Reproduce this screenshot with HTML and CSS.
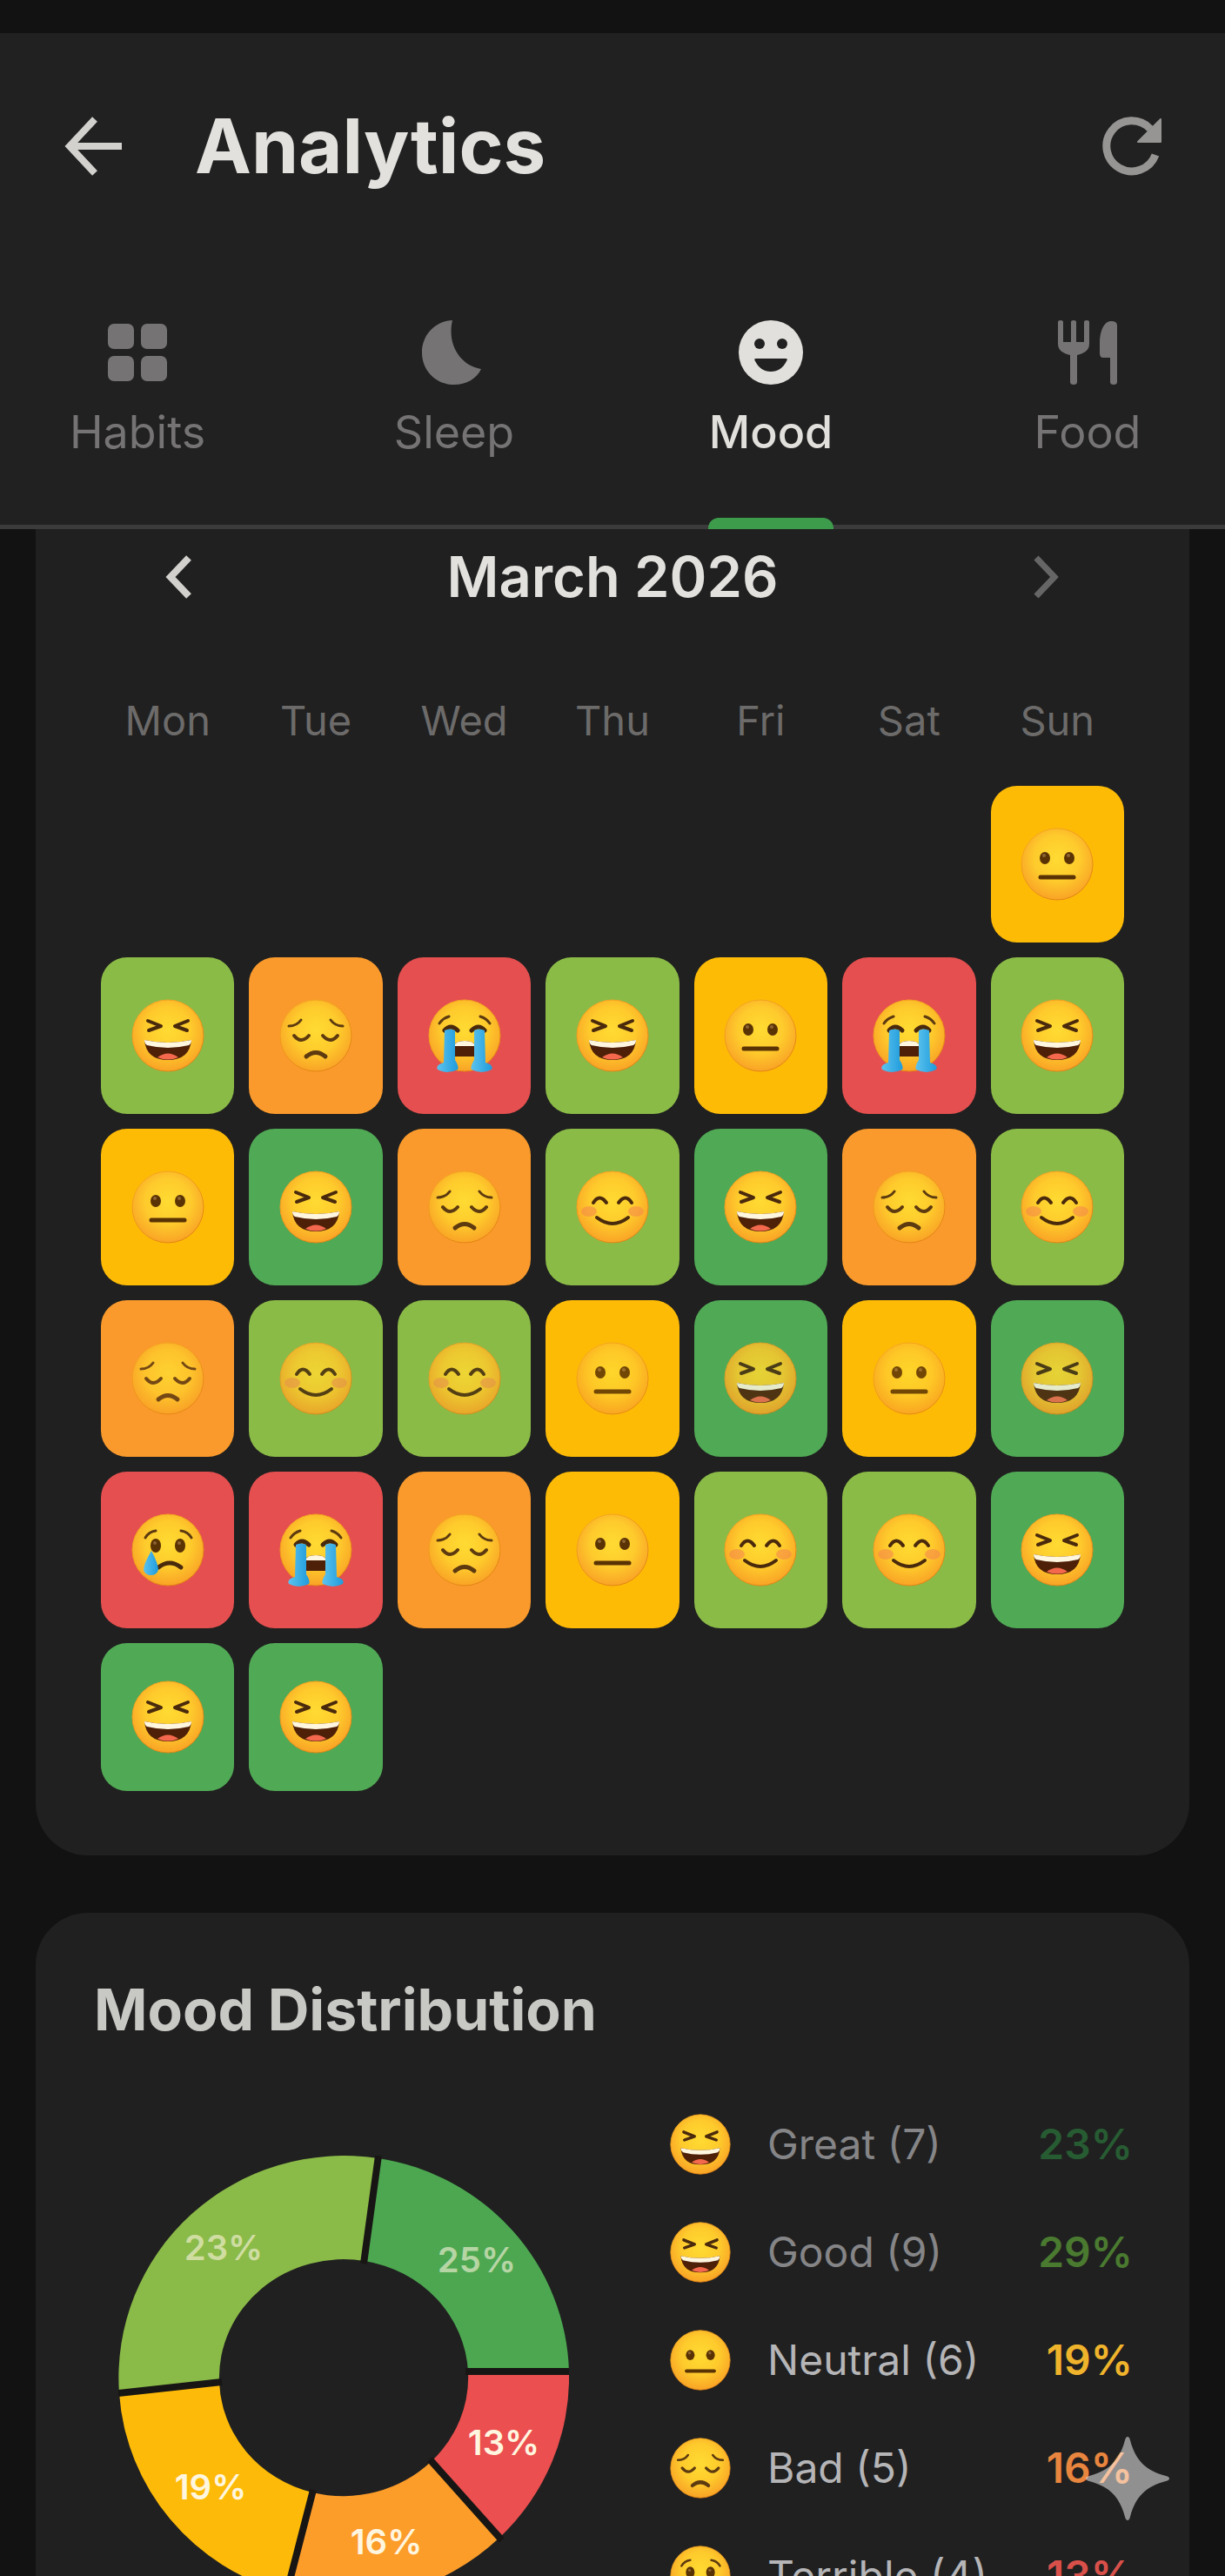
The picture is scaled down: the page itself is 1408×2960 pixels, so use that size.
FILE: index.html
```html
<!DOCTYPE html>
<html lang="en">
<head>
    <meta charset="UTF-8">
    <meta name="viewport" content="width=device-width, initial-scale=1.0">
    <title>Analytics</title>
    <link rel="stylesheet" href="styles.css">
</head>
<body>
    <!-- Mood faces, used by the calendar and the legend -->
    <svg class="sprite" aria-hidden="true">
        <defs>
            <radialGradient id="skin" cx="0.5" cy="0.42" r="0.58">
                <stop offset="0" stop-color="#ffdb32"/>
                <stop offset="0.55" stop-color="#fecb2c"/>
                <stop offset="1" stop-color="#f9a326"/>
            </radialGradient>
            <linearGradient id="rim" x1="0.2" y1="0" x2="0.8" y2="1">
                <stop offset="0" stop-color="#f6a821"/>
                <stop offset="1" stop-color="#e07f12"/>
            </linearGradient>
            <linearGradient id="water" x1="0" x2="1">
                <stop offset="0" stop-color="#5cc3ee"/>
                <stop offset="1" stop-color="#1f9bdc"/>
            </linearGradient>
        </defs>
        <symbol id="laugh" viewBox="0 0 84 84">
            <circle cx="42" cy="42" r="41" fill="url(#skin)" stroke="url(#rim)"/>
            <path d="M19 25L34 31L20 36M65 25L50 31L64 36" fill="none" stroke="#4a2a0c" stroke-width="4" stroke-linecap="round" stroke-linejoin="round"/>
            <path d="M15 47Q42 53 69 47Q67 70 42 70Q17 70 15 47Z" fill="#4f2008"/>
            <path d="M15 47Q42 53 69 47Q69 51 66 53Q42 59 18 53Q15 51 15 47Z" fill="#fff6e0"/>
            <path d="M30 67Q42 58 54 67Q42 72 30 67Z" fill="#f4694d"/>
        </symbol>
        <symbol id="pensive" viewBox="0 0 84 84">
            <circle cx="42" cy="42" r="41" fill="url(#skin)" stroke="url(#rim)"/>
            <path d="M11 31Q20 31 25 24M73 31Q64 31 59 24" fill="none" stroke="#5d3a10" stroke-width="3" stroke-linecap="round"/>
            <path d="M17 42Q25 52 34 42M50 42Q59 52 67 42" fill="none" stroke="#5d3a10" stroke-width="4" stroke-linecap="round"/>
            <path d="M31 66Q42 57 53 66" fill="none" stroke="#5d3a10" stroke-width="5" stroke-linecap="round"/>
        </symbol>
        <symbol id="sob" viewBox="0 0 84 84">
            <circle cx="42" cy="42" r="41" fill="url(#skin)" stroke="url(#rim)"/>
            <path d="M13 28Q17 22 24 20M71 28Q67 22 60 20" fill="none" stroke="#5d3a10" stroke-width="3" stroke-linecap="round"/>
            <path d="M19 36Q26 28 34 36M50 36Q58 28 65 36" fill="none" stroke="#4a2a0c" stroke-width="5" stroke-linecap="round"/>
            <path d="M28 66V56Q30 48 42 48Q54 48 56 56V66Z" fill="#4f2008"/>
            <path d="M30 54Q31 48 42 48Q53 48 54 54Z" fill="#fff6e0"/>
            <path d="M19 36Q25 33 31 36V70Q36 78 34 81Q22 87 11 81Q8 76 18 73Z" fill="url(#water)"/>
            <path d="M65 36Q59 33 53 36V70Q48 78 50 81Q62 87 73 81Q76 76 66 73Z" fill="url(#water)"/>
        </symbol>
        <symbol id="neutral" viewBox="0 0 84 84">
            <circle cx="42" cy="42" r="41" fill="url(#skin)" stroke="url(#rim)"/>
            <ellipse cx="28" cy="35" rx="6" ry="7" fill="#5a3305"/>
            <ellipse cx="56" cy="35" rx="6" ry="7" fill="#5a3305"/>
            <circle cx="27" cy="32" r="2" fill="#8d6434"/>
            <circle cx="55" cy="32" r="2" fill="#8d6434"/>
            <path d="M23 57H61" stroke="#5a3305" stroke-width="5" stroke-linecap="round"/>
        </symbol>
        <symbol id="smile" viewBox="0 0 84 84">
            <circle cx="42" cy="42" r="41" fill="url(#skin)" stroke="url(#rim)"/>
            <ellipse cx="15" cy="47" rx="9" ry="6" fill="#f58a4b" opacity="0.6"/>
            <ellipse cx="69" cy="47" rx="9" ry="6" fill="#f58a4b" opacity="0.6"/>
            <path d="M20 37Q27 26 35 37M49 37Q57 26 64 37" fill="none" stroke="#4a2a0c" stroke-width="4" stroke-linecap="round"/>
            <path d="M24 54Q42 68 60 54" fill="none" stroke="#4a2a0c" stroke-width="4" stroke-linecap="round"/>
        </symbol>
        <symbol id="cry" viewBox="0 0 84 84">
            <circle cx="42" cy="42" r="41" fill="url(#skin)" stroke="url(#rim)"/>
            <path d="M16 28Q20 21 28 20M69 28Q65 21 57 20" fill="none" stroke="#5d3a10" stroke-width="3" stroke-linecap="round"/>
            <ellipse cx="28" cy="37" rx="6" ry="8" fill="#5a3305"/>
            <ellipse cx="56" cy="37" rx="6" ry="8" fill="#5a3305"/>
            <circle cx="27" cy="34" r="2" fill="#8d6434"/>
            <circle cx="55" cy="34" r="2" fill="#8d6434"/>
            <path d="M31 62Q44 52 57 62" fill="none" stroke="#4a2a0c" stroke-width="5" stroke-linecap="round"/>
            <path d="M23 43Q14 58 14 65A9 9 0 0 0 31 65Q31 58 23 43Z" fill="url(#water)"/>
        </symbol>
    </svg>

    <div class="app">
        <header class="header">
            <div class="title-bar">
                <button class="icon-btn" type="button" aria-label="Back">
                    <svg width="66" height="68" viewBox="0 0 66 68" fill="none" stroke="currentColor" stroke-width="8"><path d="M35 3L6 34L35 65M6 34H66"/></svg>
                </button>
                <h1>Analytics</h1>
                <button class="icon-btn refresh" type="button" aria-label="Refresh">
                    <svg width="68" height="68" viewBox="0 0 68 68" fill="none"><path d="M61 44A29 29 0 1 1 55 14" stroke="currentColor" stroke-width="9"/><path d="M67 3V29H41Z" fill="currentColor" stroke="currentColor" stroke-width="2" stroke-linejoin="round"/></svg>
                </button>
            </div>
            <nav class="tabs">
                <a href="#habits" class="tab">
                    <svg width="80" height="80" viewBox="0 0 80 80" fill="currentColor"><rect x="6" y="7" width="30" height="29" rx="7"/><rect x="44" y="7" width="30" height="29" rx="7"/><rect x="6" y="44" width="30" height="29" rx="7"/><rect x="44" y="44" width="30" height="29" rx="7"/></svg>
                    <span>Habits</span>
                </a>
                <a href="#sleep" class="tab">
                    <svg width="80" height="80" viewBox="0 0 80 80" fill="currentColor"><path d="M38 3C18 4 3 20 3 40C3 61 19 77 40 77C54 77 66 70 71 59C50 56 31 34 38 3Z"/></svg>
                    <span>Sleep</span>
                </a>
                <a href="#mood" class="tab active">
                    <svg width="80" height="80" viewBox="0 0 80 80"><circle cx="40" cy="40" r="37" fill="currentColor"/><ellipse cx="27" cy="30" rx="6" ry="6" fill="#212121"/><ellipse cx="53" cy="30" rx="6" ry="6" fill="#212121"/><path d="M23 47H57Q60 47 58 50C54 58 48 62 40 62S26 58 22 50Q20 47 23 47Z" fill="#212121"/></svg>
                    <span>Mood</span>
                </a>
                <a href="#food" class="tab">
                    <svg width="80" height="80" viewBox="0 0 80 80" fill="currentColor"><path d="M6 5Q6 3 9 3Q12 3 12 5V28H21V5Q21 3 24 3Q27 3 27 5V28H36V5Q36 3 39 3Q42 3 42 5V30C42 38 36 41 28 43V74Q28 77 24 77Q20 77 20 74V43C12 41 6 38 6 30Z"/><path d="M54 29C54 15 59 4 67 4Q74 4 74 9V74Q74 77 70 77Q66 77 66 74V46H58Q54 46 54 41Z"/></svg>
                    <span>Food</span>
                </a>
            </nav>
        </header>

        <main>
            <section class="card calendar-card">
                <div class="month">
                    <button class="icon-btn" type="button" aria-label="Previous month">
                        <svg width="32" height="50" viewBox="0 0 32 50" fill="none" stroke="currentColor" stroke-width="8"><path d="M28 3L7 25L28 47"/></svg>
                    </button>
                    <h2>March 2026</h2>
                    <button class="icon-btn next" type="button" aria-label="Next month">
                        <svg width="32" height="50" viewBox="0 0 32 50" fill="none" stroke="currentColor" stroke-width="7"><path d="M4 3L25 25L4 47"/></svg>
                    </button>
                </div>
                <table class="calendar">
                    <thead>
                        <tr><th>Mon</th><th>Tue</th><th>Wed</th><th>Thu</th><th>Fri</th><th>Sat</th><th>Sun</th></tr>
                    </thead>
                    <tbody>
                        <tr>
                            <td></td><td></td><td></td><td></td><td></td><td></td>
                            <td class="neutral"><svg class="face"><use href="#neutral"/></svg></td>
                        </tr>
                        <tr>
                            <td class="good"><svg class="face"><use href="#laugh"/></svg></td>
                            <td class="bad"><svg class="face"><use href="#pensive"/></svg></td>
                            <td class="terrible"><svg class="face"><use href="#sob"/></svg></td>
                            <td class="good"><svg class="face"><use href="#laugh"/></svg></td>
                            <td class="neutral"><svg class="face"><use href="#neutral"/></svg></td>
                            <td class="terrible"><svg class="face"><use href="#sob"/></svg></td>
                            <td class="good"><svg class="face"><use href="#laugh"/></svg></td>
                        </tr>
                        <tr>
                            <td class="neutral"><svg class="face"><use href="#neutral"/></svg></td>
                            <td class="great"><svg class="face"><use href="#laugh"/></svg></td>
                            <td class="bad"><svg class="face"><use href="#pensive"/></svg></td>
                            <td class="good"><svg class="face"><use href="#smile"/></svg></td>
                            <td class="great"><svg class="face"><use href="#laugh"/></svg></td>
                            <td class="bad"><svg class="face"><use href="#pensive"/></svg></td>
                            <td class="good"><svg class="face"><use href="#smile"/></svg></td>
                        </tr>
                        <tr class="faded">
                            <td class="bad"><svg class="face"><use href="#pensive"/></svg></td>
                            <td class="good"><svg class="face"><use href="#smile"/></svg></td>
                            <td class="good"><svg class="face"><use href="#smile"/></svg></td>
                            <td class="neutral"><svg class="face"><use href="#neutral"/></svg></td>
                            <td class="great"><svg class="face"><use href="#laugh"/></svg></td>
                            <td class="neutral"><svg class="face"><use href="#neutral"/></svg></td>
                            <td class="great"><svg class="face"><use href="#laugh"/></svg></td>
                        </tr>
                        <tr>
                            <td class="terrible"><svg class="face"><use href="#cry"/></svg></td>
                            <td class="terrible"><svg class="face"><use href="#sob"/></svg></td>
                            <td class="bad"><svg class="face"><use href="#pensive"/></svg></td>
                            <td class="neutral"><svg class="face"><use href="#neutral"/></svg></td>
                            <td class="good"><svg class="face"><use href="#smile"/></svg></td>
                            <td class="good"><svg class="face"><use href="#smile"/></svg></td>
                            <td class="great"><svg class="face"><use href="#laugh"/></svg></td>
                        </tr>
                        <tr class="last">
                            <td class="great"><svg class="face"><use href="#laugh"/></svg></td>
                            <td class="great"><svg class="face"><use href="#laugh"/></svg></td>
                            <td></td><td></td><td></td><td></td><td></td>
                        </tr>
                    </tbody>
                </table>
            </section>

            <section class="card distribution">
                <h2>Mood Distribution</h2>
                <div class="chart-row">
                    <svg class="donut" width="518" height="510" viewBox="0 0 518 510" role="img" aria-label="Mood distribution chart">
                        <path fill="#4ca750" d="M299 3A259 255 0 0 1 518 248L402 248A143 136 0 0 0 283 121Z"/>
                        <path fill="#eb4f4f" d="M518 248A259 255 0 0 1 438 439L360 351A143 136 0 0 0 402 248Z"/>
                        <path fill="#fc9c29" d="M438 439A259 255 0 0 1 193 502L223 387A143 136 0 0 0 360 351Z"/>
                        <path fill="#fdba08" d="M193 502A259 255 0 0 1 1 273L116 260A143 136 0 0 0 223 387Z"/>
                        <path fill="#8aba47" d="M1 273A259 255 0 0 1 299 3L283 121A143 136 0 0 0 116 260Z"/>
                        <path stroke="#181614" stroke-width="8" d="M299 0L282 124M518 248H399M0 273L119 260M193 504L224 384M441 442L358 349"/>
                        <g class="slice-labels">
                            <text class="dim" x="121" y="120">23%</text>
                            <text class="dim" x="412" y="134">25%</text>
                            <text x="443" y="344">13%</text>
                            <text x="308" y="458">16%</text>
                            <text x="106" y="395">19%</text>
                        </g>
                    </svg>
                    <ul class="legend">
                        <li><svg class="face"><use href="#laugh"/></svg><span class="name dim">Great (7)</span><span class="pct great-text">23%</span></li>
                        <li><svg class="face"><use href="#laugh"/></svg><span class="name dim">Good (9)</span><span class="pct good-text">29%</span></li>
                        <li><svg class="face"><use href="#neutral"/></svg><span class="name">Neutral (6)</span><span class="pct neutral-text">19%</span></li>
                        <li><svg class="face"><use href="#pensive"/></svg><span class="name">Bad (5)</span><span class="pct bad-text">16%</span></li>
                        <li><svg class="face"><use href="#cry"/></svg><span class="name">Terrible (4)</span><span class="pct terrible-text">13%</span></li>
                    </ul>
                </div>
            </section>
        </main>

        <svg class="sparkle" width="96" height="96" viewBox="0 0 96 96" aria-hidden="true"><path d="M48 0Q50 0 51 4C57 27 69 39 92 45Q96 46 96 48Q96 50 92 51C69 57 57 69 51 92Q50 96 48 96Q46 96 45 92C39 69 27 57 4 51Q0 50 0 48Q0 46 4 45C27 39 39 27 45 4Q46 0 48 0Z" fill="#fff" fill-opacity="0.5"/></svg>
    </div>
</body>
</html>
```
FILE: styles.css
```css
/* General Styles */
* {
    box-sizing: border-box;
}

body {
    margin: 0;
    font-family: Inter, Roboto, sans-serif;
    color: #e2e1de;
    background-color: #121212;
}

h1, h2 {
    margin: 0;
}

.sprite {
    position: absolute;
    width: 0;
    height: 0;
}

.app {
    position: relative;
    height: 100vh;
    padding-top: 38px;
    overflow: hidden;
}

.icon-btn {
    display: flex;
    padding: 0;
    border: none;
    background: none;
    color: #d2d1ce;
    cursor: pointer;
}

/* Header */
.header {
    background-color: #212121;
    border-bottom: 5px solid #3b3b3b;
}

.title-bar {
    display: flex;
    align-items: center;
    padding: 76px 73px 0 74px;
}

.title-bar h1 {
    flex: 1;
    margin-left: 84px;
    font-size: 87px;
    line-height: 108px;
    font-weight: 700;
}

.title-bar .refresh {
    color: #969593;
}

/* Tabs */
.tabs {
    display: flex;
    justify-content: space-between;
    padding: 143px 79px 0;
}

.tab {
    position: relative;
    display: flex;
    flex-direction: column;
    align-items: center;
    gap: 22px;
    width: 158px;
    padding-bottom: 76px;
    color: #757374;
    font-size: 52px;
    line-height: 60px;
    text-decoration: none;
}

.tab.active {
    color: #e2e0dc;
    font-weight: 500;
}

.tab.active::after {
    content: "";
    position: absolute;
    left: 7px;
    right: 7px;
    bottom: -5px;
    height: 13px;
    border-radius: 12px 12px 0 0;
    background-color: #3d9b4c;
}

/* Cards */
.card {
    margin: 0 41px;
    border-radius: 60px;
    background-color: #202020;
}

.calendar-card {
    padding: 23px 58px 57px;
    border-radius: 0 0 60px 60px;
}

.month {
    display: flex;
    justify-content: space-between;
    align-items: center;
    padding: 0 90px;
}

.month h2 {
    font-size: 65px;
    line-height: 64px;
    font-weight: 600;
}

.month .next {
    color: #666;
}

/* Calendar */
.calendar {
    width: 100%;
    margin-top: 87px;
    table-layout: fixed;
    border-collapse: separate;
    border-spacing: 17px;
}

.calendar th {
    padding: 0 0 29px;
    color: #6c6b6a;
    font-size: 47px;
    line-height: 58px;
    font-weight: 400;
}

.calendar td {
    height: 180px;
    padding: 0;
    border-radius: 30px;
    text-align: center;
    vertical-align: middle;
}

.calendar .last td {
    height: 170px;
}

.face {
    width: 84px;
    height: 84px;
    vertical-align: middle;
}

.faded .face {
    opacity: 0.85;
}

.great {
    background-color: #50a955;
}

.good {
    background-color: #8bbb47;
}

.neutral {
    background-color: #febb06;
}

.bad {
    background-color: #fa9a2c;
}

.terrible {
    background-color: #e54f4f;
}

/* Mood Distribution */
.distribution {
    margin-top: 66px;
    padding: 71px 65px 60px 67px;
}

.distribution h2 {
    font-size: 66px;
    line-height: 80px;
    font-weight: 700;
    color: #c8c8c5;
}

.chart-row {
    display: flex;
    align-items: flex-start;
    gap: 116px;
    padding: 80px 0 0 28px;
}

.donut {
    flex-shrink: 0;
    margin-top: 48px;
}

.slice-labels {
    font-size: 40px;
    font-weight: 600;
    text-anchor: middle;
    fill: #fff6e0;
}

.slice-labels .dim {
    fill-opacity: 0.6;
}

.legend {
    flex: 1;
    display: flex;
    flex-direction: column;
    gap: 54px;
    margin: 0;
    padding: 0;
    list-style: none;
    font-size: 48px;
    line-height: 70px;
}

.legend li {
    display: flex;
    align-items: center;
}

.legend .face {
    width: 70px;
    height: 70px;
}

.name {
    flex: 1;
    margin-left: 42px;
    color: #b5b5b7;
}

.name.dim {
    color: #858587;
}

.pct {
    font-weight: 600;
}

.great-text {
    color: #275c33;
}

.good-text {
    color: #4a7a30;
}

.neutral-text {
    color: #f0b42c;
}

.bad-text {
    color: #e8853e;
}

.terrible-text {
    color: #d9504a;
}

.sparkle {
    position: absolute;
    right: 64px;
    bottom: 64px;
}
```
